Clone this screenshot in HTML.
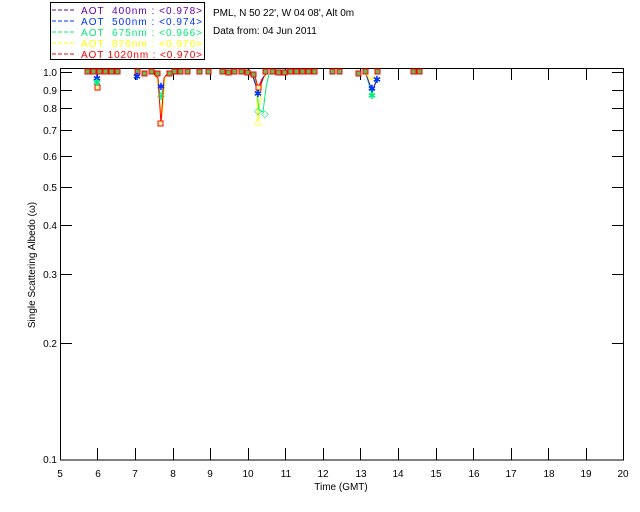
<!DOCTYPE html>
<html><head><meta charset="utf-8"><style>
html,body{margin:0;padding:0;background:#fff;width:640px;height:512px;overflow:hidden}
svg{display:block}
text{font-family:"Liberation Sans",sans-serif;font-size:10px;white-space:pre}
</style></head><body>
<svg width="640" height="512" viewBox="0 0 640 512" xmlns="http://www.w3.org/2000/svg">
<rect width="640" height="512" fill="#fff"/>
<rect x="50.5" y="2.5" width="154" height="57" fill="none" stroke="#000"/>
<g stroke-width="1" stroke-dasharray="4,2">
<line x1="52" y1="10" x2="75" y2="10" stroke="#6600aa"/>
<line x1="52" y1="21" x2="75" y2="21" stroke="#0033ff"/>
<line x1="52" y1="32" x2="75" y2="32" stroke="#00ee77"/>
<line x1="52" y1="43" x2="75" y2="43" stroke="#ffff00"/>
<line x1="52" y1="54" x2="75" y2="54" stroke="#ff0000"/>
</g>
<text x="81" y="14" fill="#6600aa" textLength="121">AOT  400nm : &lt;0.978&gt;</text>
<text x="81" y="25" fill="#0033ff" textLength="121">AOT  500nm : &lt;0.974&gt;</text>
<text x="81" y="36" fill="#00ee77" textLength="121">AOT  675nm : &lt;0.966&gt;</text>
<text x="81" y="47" fill="#ffff00" textLength="121">AOT  870nm : &lt;0.970&gt;</text>
<text x="81" y="58" fill="#ff0000" textLength="121">AOT 1020nm : &lt;0.970&gt;</text>
<text x="213" y="16" fill="#000">PML, N 50 22', W 04 08', Alt 0m</text>
<text x="213" y="34" fill="#000">Data from: 04 Jun 2011</text>
<rect x="60.5" y="68.5" width="563" height="391.5" fill="none" stroke="#000"/>
<g stroke="#000">
<line x1="60" y1="72.5" x2="72" y2="72.5"/><line x1="612" y1="72.5" x2="623" y2="72.5"/>
<line x1="60" y1="90.5" x2="72" y2="90.5"/><line x1="612" y1="90.5" x2="623" y2="90.5"/>
<line x1="60" y1="108.5" x2="72" y2="108.5"/><line x1="612" y1="108.5" x2="623" y2="108.5"/>
<line x1="60" y1="130.5" x2="72" y2="130.5"/><line x1="612" y1="130.5" x2="623" y2="130.5"/>
<line x1="60" y1="156.5" x2="72" y2="156.5"/><line x1="612" y1="156.5" x2="623" y2="156.5"/>
<line x1="60" y1="187.5" x2="72" y2="187.5"/><line x1="612" y1="187.5" x2="623" y2="187.5"/>
<line x1="60" y1="225.5" x2="72" y2="225.5"/><line x1="612" y1="225.5" x2="623" y2="225.5"/>
<line x1="60" y1="274.5" x2="72" y2="274.5"/><line x1="612" y1="274.5" x2="623" y2="274.5"/>
<line x1="60" y1="343.5" x2="72" y2="343.5"/><line x1="612" y1="343.5" x2="623" y2="343.5"/>
</g>
<g stroke="#000">
<line x1="97.5" y1="460" x2="97.5" y2="448"/><line x1="97.5" y1="69" x2="97.5" y2="80"/>
<line x1="135.5" y1="460" x2="135.5" y2="448"/><line x1="135.5" y1="69" x2="135.5" y2="80"/>
<line x1="173.5" y1="460" x2="173.5" y2="448"/><line x1="173.5" y1="69" x2="173.5" y2="80"/>
<line x1="210.5" y1="460" x2="210.5" y2="448"/><line x1="210.5" y1="69" x2="210.5" y2="80"/>
<line x1="248.5" y1="460" x2="248.5" y2="448"/><line x1="248.5" y1="69" x2="248.5" y2="80"/>
<line x1="285.5" y1="460" x2="285.5" y2="448"/><line x1="285.5" y1="69" x2="285.5" y2="80"/>
<line x1="323.5" y1="460" x2="323.5" y2="448"/><line x1="323.5" y1="69" x2="323.5" y2="80"/>
<line x1="360.5" y1="460" x2="360.5" y2="448"/><line x1="360.5" y1="69" x2="360.5" y2="80"/>
<line x1="398.5" y1="460" x2="398.5" y2="448"/><line x1="398.5" y1="69" x2="398.5" y2="80"/>
<line x1="436.5" y1="460" x2="436.5" y2="448"/><line x1="436.5" y1="69" x2="436.5" y2="80"/>
<line x1="473.5" y1="460" x2="473.5" y2="448"/><line x1="473.5" y1="69" x2="473.5" y2="80"/>
<line x1="511.5" y1="460" x2="511.5" y2="448"/><line x1="511.5" y1="69" x2="511.5" y2="80"/>
<line x1="548.5" y1="460" x2="548.5" y2="448"/><line x1="548.5" y1="69" x2="548.5" y2="80"/>
<line x1="586.5" y1="460" x2="586.5" y2="448"/><line x1="586.5" y1="69" x2="586.5" y2="80"/>
</g>
<g fill="#000" text-anchor="end">
<text x="57" y="76">1.0</text><text x="57" y="94">0.9</text><text x="57" y="112">0.8</text>
<text x="57" y="134">0.7</text><text x="57" y="160">0.6</text><text x="57" y="191">0.5</text>
<text x="57" y="229">0.4</text><text x="57" y="278">0.3</text><text x="57" y="347">0.2</text>
<text x="57" y="463">0.1</text>
</g>
<g fill="#000" text-anchor="middle">
<text x="60" y="477">5</text><text x="98" y="477">6</text><text x="135" y="477">7</text><text x="173" y="477">8</text>
<text x="210" y="477">9</text><text x="248" y="477">10</text><text x="286" y="477">11</text><text x="323" y="477">12</text>
<text x="361" y="477">13</text><text x="398" y="477">14</text><text x="436" y="477">15</text><text x="474" y="477">16</text>
<text x="511" y="477">17</text><text x="549" y="477">18</text><text x="586" y="477">19</text><text x="623" y="477">20</text>
<text x="341" y="490">Time (GMT)</text>
</g>
<text transform="translate(35,265) rotate(-90)" text-anchor="middle" fill="#000">Single Scattering Albedo (ω)</text>
<g fill="none" stroke-width="1">
<polyline stroke="#00ee77" points="150,73 157,76 161,99 165,76 170,73"/>
<polyline stroke="#ffff00" points="150,73 157,76 160,104 162,117 165,76"/>
<polyline stroke="#ff0000" points="154,74 158,78 161,124 164,78 168,73"/>
<polyline stroke="#ffff00" points="252,74 256,83 258,121 262,82 266,74"/>
<polyline stroke="#00ee77" points="254,74 257,92 259,110 263,112 266,88 269,74"/>
<polyline stroke="#ff0000" points="250,74 255,76 258,88 262,79 266,74"/>
<polyline stroke="#6600aa" points="252,74 258,92 264,76"/>
<polyline stroke="#00ee77" points="366,74 370,88 372,96 374,86 377,78"/>
<polyline stroke="#6600aa" points="366,74 370,85 373,90 377,79"/>
<polyline stroke="#ffff00" points="366,74 371,80 375,75"/>
</g>
<g fill="#66bb55" stroke="#ff0000" stroke-width="1">
<rect x="85" y="69" width="5" height="5"/><rect x="91" y="69" width="5" height="5"/><rect x="97" y="69" width="5" height="5"/>
<rect x="103" y="69" width="5" height="5"/><rect x="109" y="69" width="5" height="5"/><rect x="115" y="69" width="5" height="5"/>
<rect x="135" y="69" width="5" height="5"/><rect x="142" y="71" width="5" height="5"/><rect x="149" y="69" width="5" height="5"/>
<rect x="155" y="71" width="5" height="5"/><rect x="167" y="71" width="5" height="5"/><rect x="172" y="69" width="5" height="5"/>
<rect x="178" y="69" width="5" height="5"/><rect x="185" y="69" width="5" height="5"/>
<rect x="197" y="69" width="5" height="5"/><rect x="206" y="69" width="5" height="5"/>
<rect x="220" y="69" width="5" height="5"/><rect x="226" y="70" width="5" height="5"/><rect x="232" y="69" width="5" height="5"/>
<rect x="239" y="69" width="5" height="5"/><rect x="245" y="70" width="5" height="5"/><rect x="251" y="72" width="5" height="5"/>
<rect x="263" y="69" width="5" height="5"/><rect x="270" y="69" width="5" height="5"/><rect x="276" y="70" width="5" height="5"/>
<rect x="282" y="70" width="5" height="5"/><rect x="288" y="69" width="5" height="5"/><rect x="294" y="69" width="5" height="5"/>
<rect x="300" y="69" width="5" height="5"/><rect x="306" y="69" width="5" height="5"/><rect x="312" y="69" width="5" height="5"/>
<rect x="330" y="69" width="5" height="5"/><rect x="337" y="69" width="5" height="5"/>
<rect x="356" y="71" width="5" height="5"/><rect x="363" y="69" width="5" height="5"/><rect x="375" y="69" width="5" height="5"/>
<rect x="411" y="69" width="5" height="5"/><rect x="417" y="69" width="5" height="5"/>
</g>
<g fill="#ffff99" stroke="#ff0000" stroke-width="1">
<rect x="95" y="85" width="5" height="5"/><rect x="158" y="121" width="5" height="5"/><rect x="256" y="85" width="5" height="5"/>
</g>
<g font-size="9" text-anchor="middle">
<text x="97" y="82" fill="#0033ff">✱</text><text x="97" y="86" fill="#00ee77">✱</text>
<text x="161" y="90" fill="#0033ff">✱</text><text x="161" y="99" fill="#00ee77">◇</text>
<text x="258" y="97" fill="#0033ff">✱</text><text x="258" y="114" fill="#00ee77">◇</text><text x="265" y="117" fill="#00ee77">◇</text>
<text x="258" y="124" fill="#ffff00">△</text>
<text x="372" y="92" fill="#0033ff">✱</text><text x="372" y="99" fill="#00ee77">✱</text><text x="377" y="83" fill="#0033ff">✱</text>
<text x="137" y="80" fill="#0033ff">✱</text>
</g>
</svg>
</body></html>
